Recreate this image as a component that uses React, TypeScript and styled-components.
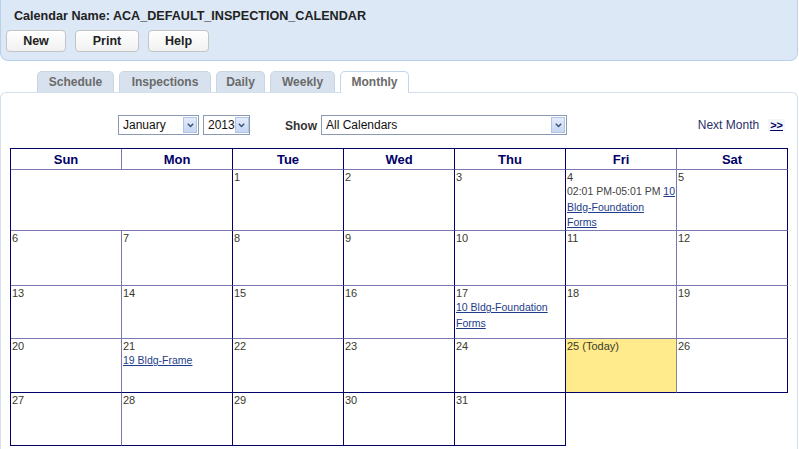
import React from 'react';
import styled, { createGlobalStyle } from 'styled-components';

const NAVY = '#000066';
const LIGHT = '#7a76b0';

const GlobalStyle = createGlobalStyle`
  body {
    margin: 0;
    background: #fff;
    font-family: "Liberation Sans", Arial, sans-serif;
    font-size: 11px;
    color: #333;
  }
`;

type Entry = { time?: string; link: string };
type Day = { n?: number; label?: string; today?: boolean; entries?: Entry[]; span?: number; empty?: boolean };

const weeks: Day[][] = [
  [
    { span: 2 },
    { n: 1 },
    { n: 2 },
    { n: 3 },
    { n: 4, entries: [{ time: '02:01 PM-05:01 PM ', link: '10 Bldg-Foundation Forms' }] },
    { n: 5 },
  ],
  [6, 7, 8, 9, 10, 11, 12].map((n) => ({ n })),
  [
    { n: 13 },
    { n: 14 },
    { n: 15 },
    { n: 16 },
    { n: 17, entries: [{ link: '10 Bldg-Foundation Forms' }] },
    { n: 18 },
    { n: 19 },
  ],
  [
    { n: 20 },
    { n: 21, entries: [{ link: '19 Bldg-Frame' }] },
    { n: 22 },
    { n: 23 },
    { n: 24 },
    { n: 25, label: '25 (Today)', today: true },
    { n: 26 },
  ],
  [{ n: 27 }, { n: 28 }, { n: 29 }, { n: 30 }, { n: 31 }, { empty: true }, { empty: true }],
];

const rowHeights = [61, 55, 53, 54, 53];
const rowBottom = [LIGHT, LIGHT, LIGHT, NAVY, NAVY];
// right border colour after each weekday column
const colRight = [LIGHT, NAVY, NAVY, NAVY, NAVY, LIGHT, NAVY];
const dayNames = ['Sun', 'Mon', 'Tue', 'Wed', 'Thu', 'Fri', 'Sat'];
const tabs = [
  { label: 'Schedule', width: 77 },
  { label: 'Inspections', width: 92 },
  { label: 'Daily', width: 49 },
  { label: 'Weekly', width: 65 },
  { label: 'Monthly', width: 69, active: true },
];

const ChevronIcon = () => (
  <svg width="7" height="5" viewBox="0 0 7 5">
    <path d="M0.8 0.8 L3.5 3.6 L6.2 0.8" fill="none" stroke="#3a4f7a" strokeWidth="1.4" />
  </svg>
);

const App = () => {
  return (
    <Page>
      <GlobalStyle />
      <HeaderPanel>
        <CalendarTitle>Calendar Name: ACA_DEFAULT_INSPECTION_CALENDAR</CalendarTitle>
        <ButtonBar>
          <ActionButton $width={60}>New</ActionButton>
          <ActionButton $width={64}>Print</ActionButton>
          <ActionButton $width={61}>Help</ActionButton>
        </ButtonBar>
      </HeaderPanel>

      <TabStrip>
        {tabs.map((t) => (
          <Tab key={t.label} $width={t.width} $active={t.active}>{t.label}</Tab>
        ))}
      </TabStrip>

      <ContentPanel>
        <FilterRow>
          <SelectBox $width={81}>
            <span>January</span>
            <ArrowBox><ChevronIcon /></ArrowBox>
          </SelectBox>
          <SelectBox $width={47}>
            <span>2013</span>
            <ArrowBox><ChevronIcon /></ArrowBox>
          </SelectBox>
          <ShowLabel>Show</ShowLabel>
          <SelectBox $width={246}>
            <span>All Calendars</span>
            <ArrowBox><ChevronIcon /></ArrowBox>
          </SelectBox>
          <NextMonth>
            Next Month <NextArrow>&gt;&gt;</NextArrow>
          </NextMonth>
        </FilterRow>

        <MonthGrid>
          {dayNames.map((d, i) => (
            <HeadCell key={d} $right={colRight[i]}>{d}</HeadCell>
          ))}
          {weeks.map((week, r) => {
            let col = 0;
            return week.map((day, i) => {
              const span = day.span ?? 1;
              col += span;
              const right = colRight[col - 1];
              if (day.empty) return <BlankCell key={`${r}-${i}`} />;
              return (
                <DayCell
                  key={`${r}-${i}`}
                  $span={span}
                  $height={rowHeights[r]}
                  $right={day.today ? '#8a8a8a' : right}
                  $bottom={rowBottom[r]}
                  $today={day.today}
                >
                  {day.n !== undefined && <DayNumber>{day.label ?? day.n}</DayNumber>}
                  {day.entries?.map((e, k) => (
                    <EntryText key={k}>
                      {e.time}
                      <EntryLink href="#">{e.link}</EntryLink>
                    </EntryText>
                  ))}
                </DayCell>
              );
            });
          })}
        </MonthGrid>
      </ContentPanel>
    </Page>
  );
};

export default App;

const Page = styled.div`
  width: 799px;
  height: 449px;
  overflow: hidden;
`;

const HeaderPanel = styled.div`
  box-sizing: border-box;
  width: 798px;
  height: 61px;
  background: #dce8f6;
  border: 1px solid #b9d0ea;
  border-top: none;
  border-radius: 0 0 8px 8px;
  padding: 9px 0 0 13px;
`;

const CalendarTitle = styled.div`
  font-weight: bold;
  font-size: 12.6px;
  color: #222;
  line-height: 14px;
`;

const ButtonBar = styled.div`
  display: flex;
  gap: 9px;
  margin: 7px 0 0 -8px;
`;

const ActionButton = styled.button<{ $width: number }>`
  box-sizing: border-box;
  width: ${({ $width }) => $width}px;
  height: 22px;
  padding: 0;
  border: 1px solid #c4c4c4;
  border-radius: 4px;
  background: linear-gradient(#ffffff, #f1f1f1);
  font-family: "Liberation Sans", Arial, sans-serif;
  font-weight: bold;
  font-size: 12.5px;
  color: #222;
`;

const TabStrip = styled.div`
  display: flex;
  align-items: flex-end;
  gap: 5px;
  height: 31px;
  padding-left: 37px;
  position: relative;
  z-index: 1;
`;

const Tab = styled.div<{ $width: number; $active?: boolean }>`
  box-sizing: border-box;
  width: ${({ $width }) => $width}px;
  height: ${({ $active }) => ($active ? 22 : 21)}px;
  margin-bottom: ${({ $active }) => ($active ? -1 : 0)}px;
  padding-top: 4px;
  text-align: center;
  white-space: nowrap;
  border: 1px solid ${({ $active }) => ($active ? '#c4d6ea' : '#cbd6e3')};
  border-bottom: none;
  border-radius: 5px 5px 0 0;
  background: ${({ $active }) => ($active ? '#fff' : '#d8e2ee')};
  font-weight: bold;
  font-size: 12px;
  line-height: 13px;
  color: #6a6a6a;
`;

const ContentPanel = styled.div`
  box-sizing: border-box;
  width: 798px;
  height: 360px;
  border: 1px solid #d3dfec;
  border-bottom: none;
  border-radius: 6px 6px 0 0;
  padding: 22px 0 0 9px;
`;

const FilterRow = styled.div`
  display: flex;
  align-items: center;
  height: 20px;
  padding-left: 108px;
`;

const SelectBox = styled.div<{ $width: number }>`
  box-sizing: border-box;
  width: ${({ $width }) => $width}px;
  height: 20px;
  border: 1px solid #8a9ab3;
  background: #fff;
  display: flex;
  align-items: center;
  justify-content: space-between;
  padding: 0 1px 0 4px;
  font-size: 12px;
  color: #111;
  overflow: hidden;
  white-space: nowrap;
  & + & {
    margin-left: 4px;
  }
`;

const ArrowBox = styled.span`
  flex-shrink: 0;
  width: 14px;
  height: 16px;
  border: 1px solid #b3c4e0;
  box-sizing: border-box;
  background: linear-gradient(#e4ecfb, #c5d5f3);
  display: flex;
  align-items: center;
  justify-content: center;
`;

const ShowLabel = styled.span`
  margin: 2px 4px 0 35px;
  font-weight: bold;
  font-size: 12px;
  color: #333;
`;

const NextMonth = styled.div`
  margin-left: auto;
  margin-right: 12px;
  font-size: 12px;
  color: #2a2f6a;
  display: flex;
  align-items: center;
  gap: 9px;
`;

const NextArrow = styled.a`
  font-weight: bold;
  font-size: 11px;
  color: #000066;
  text-decoration: underline;
  background: #f3f6fb;
  padding: 0 2px;
`;

const MonthGrid = styled.div`
  display: grid;
  grid-template-columns: repeat(7, 111px);
  width: 778px;
  margin-top: 13px;
  border-top: 1px solid ${NAVY};
  border-left: 1px solid ${NAVY};
  box-sizing: border-box;
`;

const HeadCell = styled.div<{ $right: string }>`
  height: 20px;
  border-right: 1px solid ${({ $right }) => $right};
  border-bottom: 1px solid ${LIGHT};
  display: flex;
  align-items: center;
  justify-content: center;
  font-weight: bold;
  font-size: 13px;
  color: ${NAVY};
`;

const DayCell = styled.div<{ $span: number; $height: number; $right: string; $bottom: string; $today?: boolean }>`
  grid-column: span ${({ $span }) => $span};
  height: ${({ $height }) => $height - 2}px;
  border-right: 1px solid ${({ $right }) => $right};
  border-bottom: 1px solid ${({ $bottom }) => $bottom};
  background: ${({ $today }) => ($today ? '#ffea8c' : '#fff')};
  padding: 1px 0 0 1px;
  overflow: hidden;
`;

const BlankCell = styled.div`
  background: #fff;
`;

const DayNumber = styled.div`
  font-size: 11px;
  line-height: 13px;
  color: #3a3a2a;
`;

const EntryText = styled.div`
  font-size: 10.5px;
  line-height: 15.5px;
  color: #444;
`;

const EntryLink = styled.a`
  color: #1d3d8a;
  text-decoration: underline;
`;
